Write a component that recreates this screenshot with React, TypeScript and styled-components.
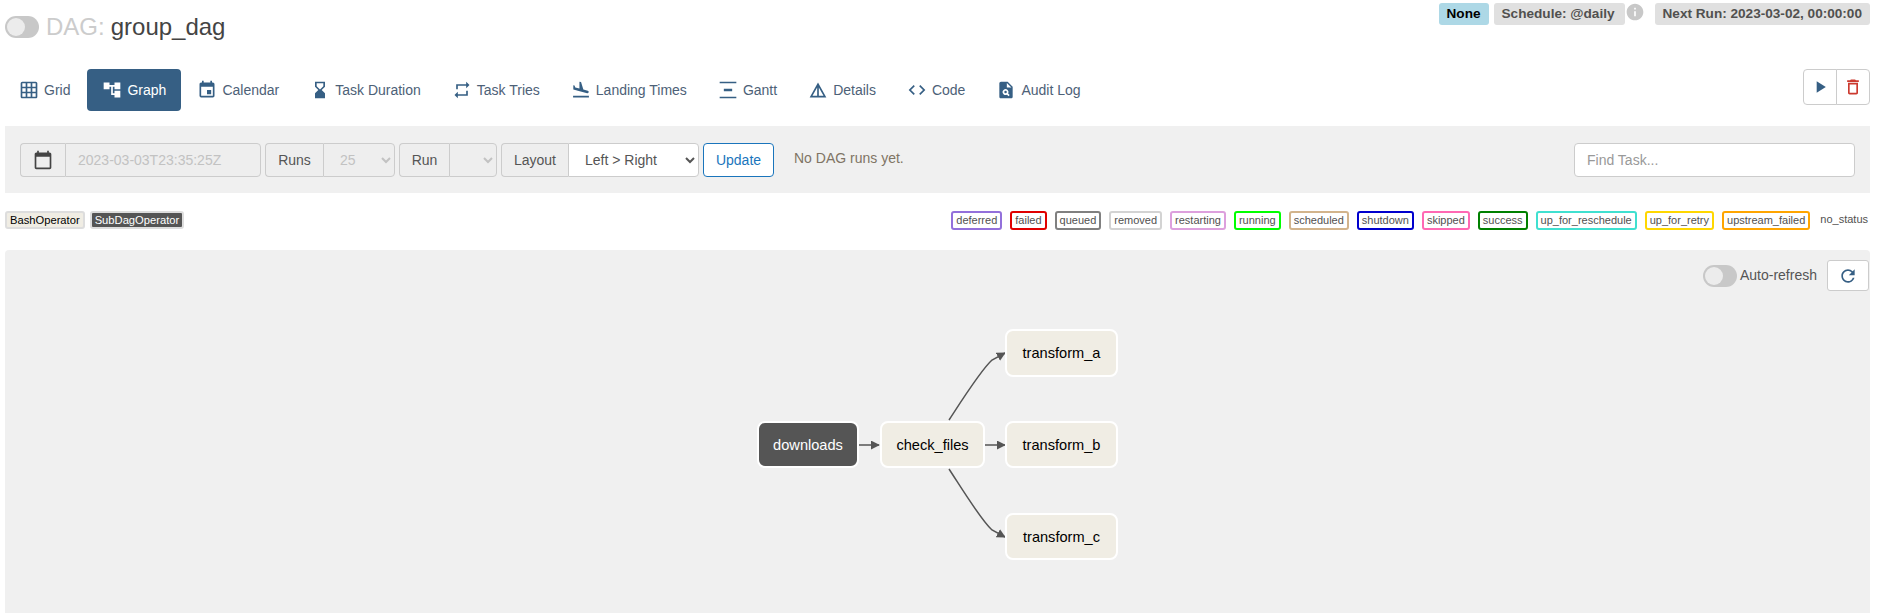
import styled, { createGlobalStyle } from 'styled-components';
import {
  MdAccountTree,
  MdCalendarToday,
  MdCode,
  MdDeleteOutline,
  MdDetails,
  MdEvent,
  MdFlightLand,
  MdGridOn,
  MdHourglassBottom,
  MdInfo,
  MdPlagiarism,
  MdPlayArrow,
  MdRefresh,
  MdRepeat,
  MdVerticalDistribute,
} from 'react-icons/md';

const tabs = [
  { label: 'Grid', icon: MdGridOn },
  { label: 'Graph', icon: MdAccountTree, active: true },
  { label: 'Calendar', icon: MdEvent },
  { label: 'Task Duration', icon: MdHourglassBottom },
  { label: 'Task Tries', icon: MdRepeat },
  { label: 'Landing Times', icon: MdFlightLand },
  { label: 'Gantt', icon: MdVerticalDistribute },
  { label: 'Details', icon: MdDetails },
  { label: 'Code', icon: MdCode },
  { label: 'Audit Log', icon: MdPlagiarism },
];

const states = [
  ['deferred', 'mediumpurple'],
  ['failed', '#e00000'],
  ['queued', 'gray'],
  ['removed', 'lightgrey'],
  ['restarting', 'plum'],
  ['running', 'lime'],
  ['scheduled', 'tan'],
  ['shutdown', 'mediumblue'],
  ['skipped', 'hotpink'],
  ['success', 'green'],
  ['up_for_reschedule', 'turquoise'],
  ['up_for_retry', 'gold'],
  ['upstream_failed', 'orange'],
];

const nodes = [
  { id: 'downloads', x: 752, y: 171, w: 102, h: 47, dark: true },
  { id: 'check_files', x: 875, y: 171, w: 105, h: 47 },
  { id: 'transform_a', x: 1000, y: 79, w: 113, h: 48 },
  { id: 'transform_b', x: 1000, y: 171, w: 113, h: 47 },
  { id: 'transform_c', x: 1000, y: 263, w: 113, h: 47 },
];

const App = () => {
  return (
    <Page>
      <GlobalStyle />
      <Header>
        <Title>
          <Switch />
          <DagPrefix>DAG:</DagPrefix>
          <DagName>group_dag</DagName>
        </Title>
        <Meta>
          <Label $tone="#add8e6" $color="#000">None</Label>
          <Label $trail={10}>Schedule: @daily</Label>
          <InfoIcon><MdInfo /></InfoIcon>
          <Label>Next Run: 2023-03-02, 00:00:00</Label>
        </Meta>
      </Header>

      <NavRow>
        <Tabs>
          {tabs.map((tab) => (
            <Tab key={tab.label} $active={tab.active}>
              <tab.icon />
              {tab.label}
            </Tab>
          ))}
        </Tabs>
        <Actions>
          <ActionButton $color="#365f84"><MdPlayArrow /></ActionButton>
          <ActionButton $color="#cc3a2f"><MdDeleteOutline /></ActionButton>
        </Actions>
      </NavRow>

      <Filters>
        <FilterGroup>
          <Addon $width={45}><MdCalendarToday /></Addon>
          <DateInput disabled value="2023-03-03T23:35:25Z" readOnly />
        </FilterGroup>
        <FilterGroup>
          <Addon $width={58}>Runs</Addon>
          <Select disabled $width={72}><option>25</option></Select>
        </FilterGroup>
        <FilterGroup>
          <Addon $width={50}>Run</Addon>
          <Select disabled $width={48}><option></option></Select>
        </FilterGroup>
        <FilterGroup>
          <Addon $width={67}>Layout</Addon>
          <Select $width={131}><option>Left &gt; Right</option></Select>
        </FilterGroup>
        <UpdateButton>Update</UpdateButton>
        <Message>No DAG runs yet.</Message>
        <FindInput placeholder="Find Task..." />
      </Filters>

      <Legend>
        <Operators>
          <Operator>BashOperator</Operator>
          <Operator $dark>SubDagOperator</Operator>
        </Operators>
        <States>
          {states.map(([name, color]) => (
            <State key={name} $color={color}>{name}</State>
          ))}
          <NoStatus>no_status</NoStatus>
        </States>
      </Legend>

      <GraphPanel>
        <RefreshBar>
          <Switch $small />
          <RefreshLabel>Auto-refresh</RefreshLabel>
          <RefreshButton><MdRefresh /></RefreshButton>
        </RefreshBar>
        <Edges viewBox="0 0 1865 363">
          <defs>
            <marker id="arrow" viewBox="0 0 10 10" refX="9" refY="5" markerWidth="6" markerHeight="6" orient="auto">
              <path d="M0 0 L10 5 L0 10 z" fill="#555" />
            </marker>
          </defs>
          <Edge d="M854 195 L874 195" markerEnd="url(#arrow)" />
          <Edge d="M980 195 L1000 195" markerEnd="url(#arrow)" />
          <Edge d="M944 170 C959 147 976 120 987 110 L1000 103" markerEnd="url(#arrow)" />
          <Edge d="M944 219 C959 242 976 270 987 280 L1000 287" markerEnd="url(#arrow)" />
        </Edges>
        {nodes.map((node) => (
          <Node
            key={node.id}
            $dark={node.dark}
            style={{ left: node.x, top: node.y, width: node.w, height: node.h }}
          >
            {node.id}
          </Node>
        ))}
      </GraphPanel>
    </Page>
  );
};

export default App;

// Estilos
const GlobalStyle = createGlobalStyle`
  html, body {
    margin: 0;
    height: 100%;
    overflow: hidden;
    background: #fff;
  }
  body {
    font-family: "Liberation Sans", Arial, sans-serif;
    font-size: 14px;
    color: #51504f;
  }
  * {
    box-sizing: border-box;
  }
`;

const Page = styled.div`
  display: flex;
  flex-direction: column;
  height: 100vh;
  padding: 0 21px 0 5px;
`;

const Header = styled.div`
  display: flex;
  justify-content: space-between;
  align-items: flex-start;
  height: 69px;
`;

const Title = styled.div`
  display: flex;
  align-items: center;
  padding-top: 13px;
`;

const Switch = styled.span<{ $small?: boolean }>`
  position: relative;
  display: inline-block;
  width: 34px;
  height: 22px;
  border-radius: 11px;
  background: #c8c8c8;
  margin-right: ${(p) => (p.$small ? '3px' : '7px')};

  &::after {
    content: '';
    position: absolute;
    left: 2px;
    top: 2px;
    width: 18px;
    height: 18px;
    border-radius: 50%;
    background: #ececec;
  }
`;

const DagPrefix = styled.span`
  font-size: 24px;
  color: #ccc;
  margin-right: 6px;
`;

const DagName = styled.span`
  font-size: 24px;
  color: #444;
`;

const Meta = styled.div`
  display: flex;
  align-items: flex-start;
  padding-top: 3px;
`;

const Label = styled.span<{ $tone?: string; $color?: string; $trail?: number }>`
  height: 22px;
  padding: 0 ${(p) => p.$trail || 8}px 0 8px;
  margin-left: 5px;
  border-radius: 3px;
  background: ${(p) => p.$tone || '#e0e0e0'};
  color: ${(p) => p.$color || '#51504f'};
  font-size: 13.6px;
  font-weight: 700;
  line-height: 21px;
`;

const InfoIcon = styled.span`
  display: flex;
  width: 25px;
  margin-top: -1px;
  color: #c8c8c8;
  font-size: 20px;
`;

const NavRow = styled.div`
  display: flex;
  justify-content: space-between;
  align-items: flex-start;
  height: 57px;
`;

const Tabs = styled.div`
  display: flex;
  gap: 1px;
  margin-left: -1px;
`;

const Tab = styled.a<{ $active?: boolean }>`
  display: flex;
  align-items: center;
  gap: 5px;
  height: 42px;
  padding: 0 15px 1px;
  border-radius: 4px;
  background: ${(p) => (p.$active ? '#365f84' : 'transparent')};
  color: ${(p) => (p.$active ? '#fff' : '#4d6177')};
  font-size: 14px;

  &:first-child {
    margin-right: 1px;
  }

  svg {
    font-size: 20px;
    color: ${(p) => (p.$active ? '#fff' : '#365f84')};
  }
`;

const Actions = styled.div`
  display: flex;
  height: 36px;
`;

const ActionButton = styled.button<{ $color: string }>`
  display: flex;
  align-items: center;
  justify-content: center;
  width: 34px;
  padding: 0;
  background: #fff;
  border: 1px solid #ccc;
  color: ${(p) => p.$color};
  font-size: 20px;

  &:first-child {
    border-radius: 4px 0 0 4px;
  }
  &:last-child {
    margin-left: -1px;
    border-radius: 0 4px 4px 0;
  }
`;

const Filters = styled.div`
  display: flex;
  align-items: center;
  gap: 4px;
  height: 67px;
  padding: 0 15px;
  background: #f0f0f0;
`;

const FilterGroup = styled.div`
  display: flex;
  height: 34px;
`;

const Addon = styled.span<{ $width: number }>`
  display: flex;
  align-items: center;
  justify-content: center;
  width: ${(p) => p.$width}px;
  border: 1px solid #ccc;
  border-right: 0;
  border-radius: 4px 0 0 4px;
  background: #eee;
  color: #555;
  font-size: 14px;

  svg {
    font-size: 20px;
    color: #444;
  }
`;

const DateInput = styled.input`
  width: 196px;
  padding: 0 12px;
  border: 1px solid #ccc;
  border-radius: 0 4px 4px 0;
  background: #eee;
  color: #c2c2c2;
  font: 14px "Liberation Sans", Arial, sans-serif;
`;

const Select = styled.select<{ $width: number }>`
  width: ${(p) => p.$width}px;
  padding: 0 8px 0 12px;
  border: 1px solid #ccc;
  border-radius: 0 4px 4px 0;
  background: ${(p) => (p.disabled ? '#eee' : '#fff')};
  color: ${(p) => (p.disabled ? '#c2c2c2' : '#555')};
  font: 14px "Liberation Sans", Arial, sans-serif;
  opacity: 1;
`;

const UpdateButton = styled.button`
  width: 71px;
  height: 34px;
  padding: 0;
  border: 1px solid #1a75bc;
  border-radius: 4px;
  background: #fff;
  color: #1a75bc;
  font: 14px "Liberation Sans", Arial, sans-serif;
`;

const Message = styled.span`
  margin: 0 0 4px 16px;
  color: #7f7464;
  font-size: 14px;
`;

const FindInput = styled.input`
  width: 281px;
  height: 34px;
  margin-left: auto;
  padding: 0 12px;
  border: 1px solid #ccc;
  border-radius: 4px;
  background: #fff;
  font: 14px "Liberation Sans", Arial, sans-serif;

  &::placeholder {
    color: #999;
  }
`;

const Legend = styled.div`
  display: flex;
  justify-content: space-between;
  align-items: flex-start;
  height: 57px;
  padding-top: 18px;
`;

const Operators = styled.div`
  display: flex;
  gap: 5px;
`;

const Operator = styled.span<{ $dark?: boolean }>`
  height: 18px;
  padding: 0 3px;
  border: 2px solid #ddd;
  border-radius: 3px;
  background: ${(p) => (p.$dark ? '#555' : '#f0ede4')};
  color: ${(p) => (p.$dark ? '#fff' : '#000')};
  font-size: 11.2px;
  line-height: 14px;
`;

const States = styled.div`
  display: flex;
  gap: 8px;
  padding-right: 2px;
`;

const State = styled.span<{ $color: string }>`
  height: 19px;
  padding: 0 3px;
  border: 2px solid ${(p) => p.$color};
  border-radius: 3px;
  color: #51504f;
  font-size: 11px;
  line-height: 15px;
`;

const NoStatus = styled.span`
  padding: 2px 0 0 2px;
  color: #51504f;
  font-size: 11px;
`;

const GraphPanel = styled.div`
  position: relative;
  flex: 1;
  background: #f0f0f0;
  border-radius: 4px 4px 0 0;
`;

const RefreshBar = styled.div`
  display: flex;
  justify-content: flex-end;
  align-items: center;
  padding: 10px 1px 0 0;
`;

const RefreshLabel = styled.span`
  margin: -2px 10px 0 0;
  color: #555;
  font-size: 14px;
`;

const RefreshButton = styled.button`
  display: flex;
  align-items: center;
  justify-content: center;
  width: 42px;
  height: 31px;
  padding: 0;
  border: 1px solid #ccc;
  border-radius: 3px;
  background: #fff;
  color: #365f84;
  font-size: 20px;
`;

const Edges = styled.svg`
  position: absolute;
  left: 0;
  top: 0;
  width: 1865px;
  height: 363px;
  pointer-events: none;
`;

const Edge = styled.path`
  fill: none;
  stroke: #555;
  stroke-width: 1.5;
`;

const Node = styled.div<{ $dark?: boolean }>`
  position: absolute;
  display: flex;
  align-items: center;
  justify-content: center;
  border: 2px solid #fff;
  border-radius: 8px;
  background: ${(p) => (p.$dark ? '#555' : '#f0ede4')};
  color: ${(p) => (p.$dark ? '#fff' : '#000')};
  font-size: 14.6px;
`;
